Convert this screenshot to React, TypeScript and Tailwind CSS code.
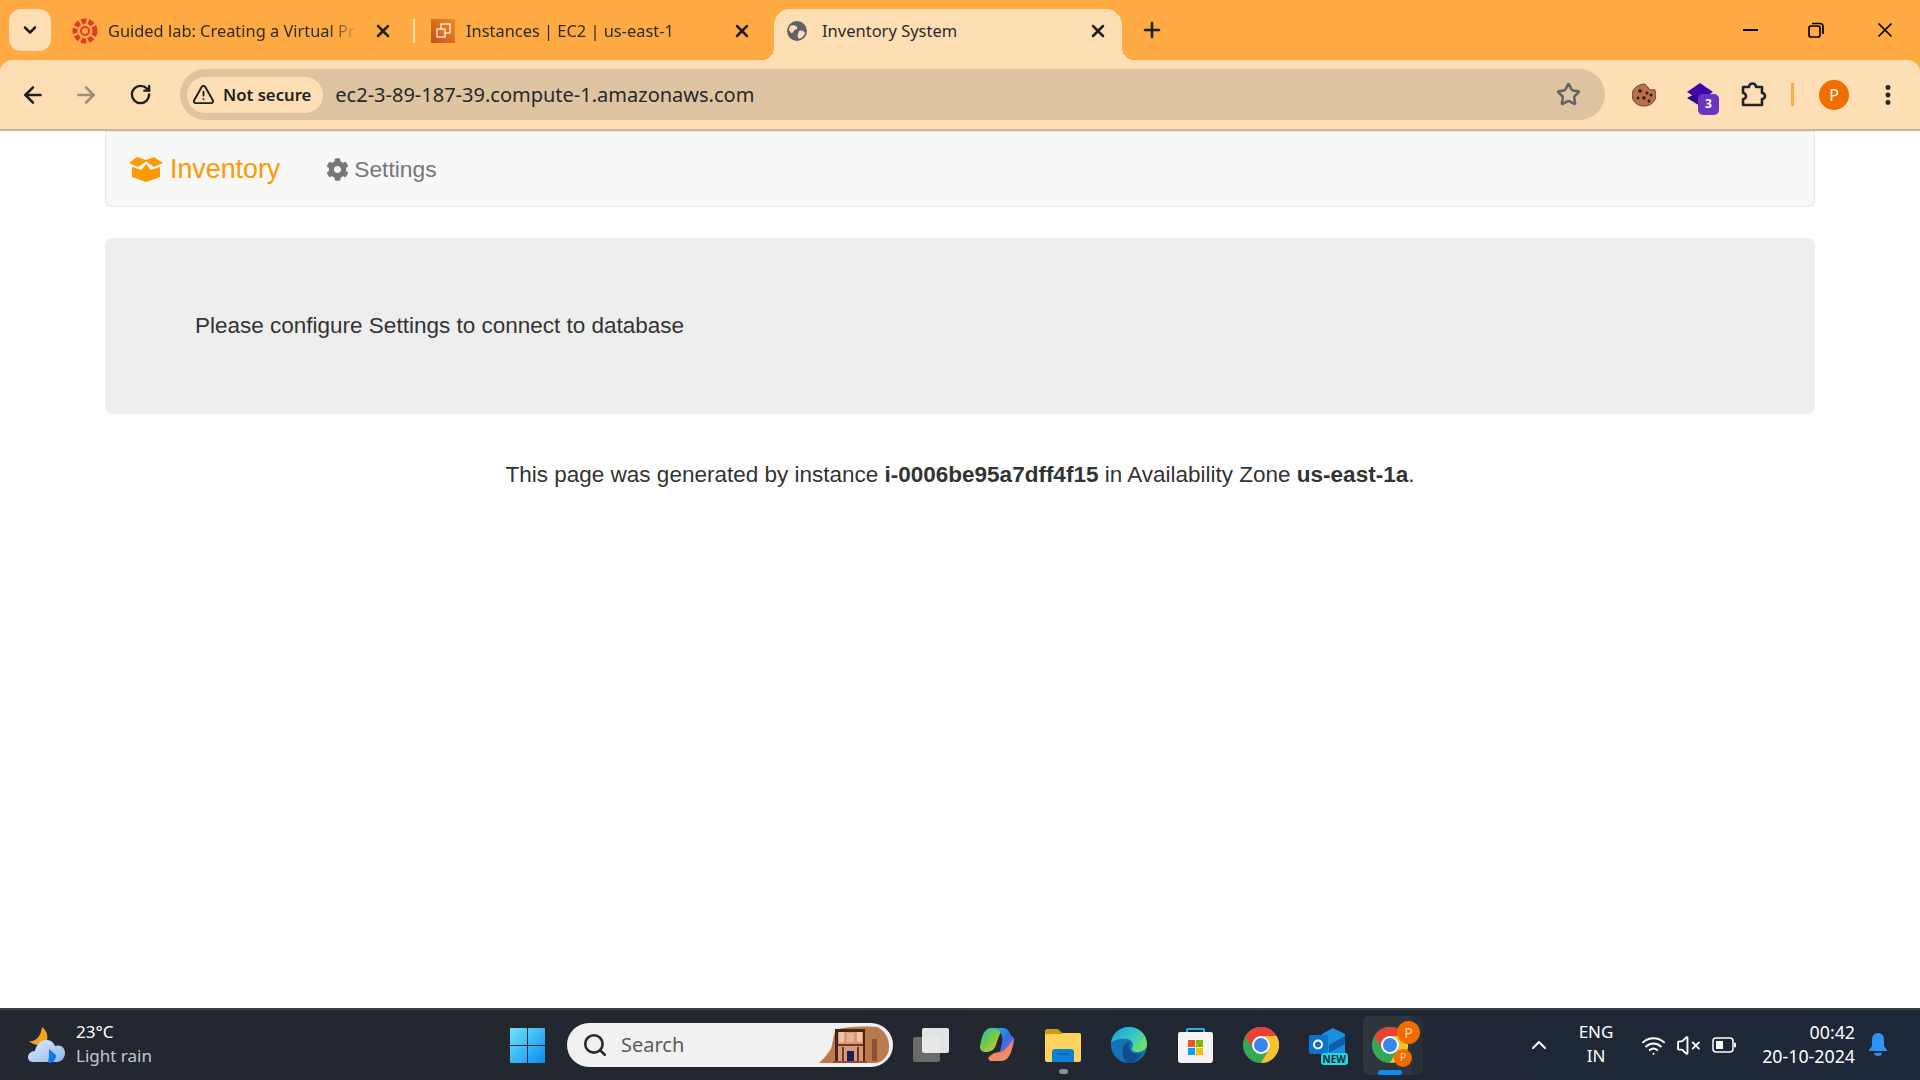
import { FaCog } from "react-icons/fa";
import { ArrowLeft, ArrowRight, ChevronDown, ChevronUp, EllipsisVertical, Plus, RotateCw, Search, Star, TriangleAlert, VolumeX, Wifi, X } from "lucide-react";

const uiFont = "font-['Noto_Sans',sans-serif]";

const CanvasIcon = () => (
  <svg width="26" height="26" viewBox="0 0 26 26">
    <circle cx="13" cy="13" r="4" fill="none" stroke="#e13a2c" strokeWidth="2" />
    <circle cx="13" cy="13" r="10" fill="none" stroke="#e13a2c" strokeWidth="5" strokeDasharray="5 2.2" />
  </svg>
);

const Ec2Icon = () => (
  <svg width="24" height="24" viewBox="0 0 24 24">
    <defs>
      <linearGradient id="ec2" x1="0" y1="1" x2="1" y2="0">
        <stop offset="0" stopColor="#c8511b" />
        <stop offset="1" stopColor="#f08a1d" />
      </linearGradient>
    </defs>
    <rect width="24" height="24" fill="url(#ec2)" />
    <rect x="10" y="5" width="9" height="9" fill="none" stroke="#fff" strokeWidth="1.2" />
    <rect x="6" y="10" width="8" height="8" fill="url(#ec2)" stroke="#fff" strokeWidth="1.2" />
  </svg>
);

const GlobeIcon = () => (
  <svg width="20" height="20" viewBox="0 0 20 20">
    <circle cx="10" cy="10" r="10" fill="#5f6368" />
    <path d="M3 5c3-1 5-1 7 1 1 2-1 3-3 3 0 2-1 3-3 3L2 9zM12 10c3-1 5 0 6 2-1 3-3 5-6 6-1-2-2-3-1-5z" fill="#fedeb5" />
  </svg>
);

const BoxIcon = () => (
  <svg width="34" height="25" viewBox="0 0 34 25" fill="#ff9900">
    <path d="M0 6 8 0 17 3 25 0 34 6 25 10 17 4.500 9 10z" />
    <path d="M17 7 21.500 13 31 10V20L17 25 3 20V10L12.500 13z" />
  </svg>
);

const CookieIcon = () => (
  <svg width="24" height="24" viewBox="0 0 24 24">
    <path d="M13 1c1 2 2 3 3 3 0 2 2 3 3.500 2.500 1 .5 2 .5 3 0C23.500 8 24 10 24 12c0 6-5 11-12 11S0 18 0 12 6 1 13 1z" fill="#b9714a" stroke="#3d2a22" strokeWidth="0.8" />
    <circle cx="8" cy="8" r="1.800" fill="#2b1b16" />
    <circle cx="15" cy="10" r="1.500" fill="#2b1b16" />
    <circle cx="19" cy="12" r="1.500" fill="#2b1b16" />
    <circle cx="6" cy="15" r="1.500" fill="#2b1b16" />
    <circle cx="12" cy="15" r="1.800" fill="#2b1b16" />
    <circle cx="17" cy="18" r="1.500" fill="#2b1b16" />
  </svg>
);

const StackIcon = () => (
  <svg width="26" height="24" viewBox="0 0 26 24">
    <path d="M0 15 13 8 26 15 13 23z" fill="#2f0a8f" />
    <path d="M0 9 13 0 26 9 13 17z" fill="#3f06a8" />
  </svg>
);

const PuzzleIcon = () => (
  <svg width="26" height="26" viewBox="0 0 26 26" fill="none" stroke="#1f2328" strokeWidth="2.600" strokeLinejoin="round">
    <path d="M2 5h6a3.500 3.500 0 0 1 7 0h6v6a3 3 0 0 1 0 6v6H2v-6a3 3 0 0 0 0-6z" />
  </svg>
);

const WindowsIcon = () => (
  <svg width="35" height="35" viewBox="0 0 35 35">
    <defs>
      <linearGradient id="win" x1="0" y1="0" x2="1" y2="1">
        <stop offset="0" stopColor="#6fe3fb" />
        <stop offset="1" stopColor="#0a8cf0" />
      </linearGradient>
    </defs>
    <path d="M1 0h16v17H0V1a1 1 0 0 1 1-1zM18 0h16a1 1 0 0 1 1 1v16H18zM0 18h17v17H1a1 1 0 0 1-1-1zM18 18h17v16a1 1 0 0 1-1 1H18z" fill="url(#win)" />
  </svg>
);

const PetraIcon = () => (
  <svg width="72" height="40" viewBox="0 0 72 40" className="block">
    <path d="M0 38 6 32 12 24 16 6C22 1 50 1 58 2 66 5 71 14 70 24 69 32 62 38 56 38z" fill="#b97a4d" />
    <rect x="16" y="4" width="30" height="34" fill="#4a2418" />
    <rect x="19" y="7" width="25" height="31" fill="#d79a75" />
    <rect x="20" y="7" width="5" height="10" fill="#f0c3a3" />
    <rect x="38" y="7" width="5" height="10" fill="#f0c3a3" />
    <rect x="28" y="8" width="7" height="9" fill="#e8b594" />
    <rect x="19" y="19" width="25" height="2" fill="#6e3a25" />
    <rect x="23" y="22" width="2" height="14" fill="#6e3a25" />
    <rect x="38" y="22" width="2" height="14" fill="#6e3a25" />
    <rect x="28" y="26" width="7" height="12" fill="#1d1a5e" />
    <rect x="14" y="36" width="34" height="2" fill="#8a5233" />
    <rect x="53" y="14" width="5" height="22" fill="#8a5233" />
  </svg>
);

const TaskViewIcon = () => (
  <svg width="37" height="34" viewBox="0 0 37 34">
    <rect y="9" width="27" height="25" rx="2" fill="#6b6b6b" />
    <rect x="9" width="27" height="25" rx="2" fill="#f4f4f4" fillOpacity="0.92" />
  </svg>
);

const CopilotIcon = () => (
  <svg width="35" height="34" viewBox="0 0 35 34">
    <defs>
      <linearGradient id="cop1" x1="0" y1="0" x2="1" y2="1">
        <stop offset="0" stopColor="#1fb6e8" />
        <stop offset="0.5" stopColor="#2f6fe0" />
        <stop offset="1" stopColor="#b55fd8" />
      </linearGradient>
      <linearGradient id="cop2" x1="0" y1="0" x2="1" y2="1">
        <stop offset="0" stopColor="#1fb6e8" />
        <stop offset="0.4" stopColor="#6cc94a" />
        <stop offset="1" stopColor="#f6c033" />
      </linearGradient>
    </defs>
    <path d="M10 0H24C20 4 18 10 16 17 14 22 11 24 6 24 2 24 0 22 0 19 1 10 4 1 10 0z" fill="url(#cop2)" />
    <path d="M13 0H24C28 1 30 4 31 8 33 8 35 11 34 14 33 20 29 27 22 28 19 28 19 26 20 23 22 16 24 9 20 4 18 1 15 1 13 0z" fill="url(#cop1)" />
    <path d="M10 33H22C28 33 33 24 33 12 28 18 24 24 20 24 15 24 11 26 8 30z" fill="#f28a68" />
  </svg>
);

const FilesIcon = () => (
  <svg width="36" height="33" viewBox="0 0 36 33">
    <path d="M0 2a2 2 0 0 1 2-2h11l4 4h17a2 2 0 0 1 2 2v4H0z" fill="#c99a16" />
    <path d="M0 5h16l3-1h15a2 2 0 0 1 2 2v25a2 2 0 0 1-2 2H2a2 2 0 0 1-2-2z" fill="#ffd35c" />
    <path d="M7 33V23a3 3 0 0 1 3-3h16a3 3 0 0 1 3 3v10z" fill="#0f7fd6" />
    <rect x="12" y="24" width="12" height="1.500" fill="#0a5a9c" />
  </svg>
);

const EdgeIcon = () => (
  <svg width="36" height="36" viewBox="0 0 36 36">
    <defs>
      <linearGradient id="edge1" x1="0" y1="0" x2="1" y2="0.6">
        <stop offset="0" stopColor="#1d9dd6" />
        <stop offset="0.6" stopColor="#35c4c8" />
        <stop offset="1" stopColor="#6ce06a" />
      </linearGradient>
    </defs>
    <circle cx="18" cy="18" r="18" fill="#1372b8" />
    <path d="M0 16C1 6 9 0 18 0 29 0 36 8 36 17 36 23 31 25 26 25 22 25 20 23 21 21 23 18 22 13 16 12 9 11 3 13 0 16z" fill="url(#edge1)" />
    <path d="M12 27C10 20 14 14 20 15 17 17 17 22 21 25 25 28 29 27 31 26 28 32 23 36 17 36 13 34 12 31 12 27z" fill="#0f4c8f" />
  </svg>
);

const StoreIcon = () => (
  <svg width="35" height="35" viewBox="0 0 35 35">
    <path d="M9 6V2a1 1 0 0 1 1-1h15a1 1 0 0 1 1 1v4" fill="none" stroke="#2ab0e8" strokeWidth="2" />
    <path d="M0 6a2 2 0 0 1 2-2h31a2 2 0 0 1 2 2v26a3 3 0 0 1-3 3H3a3 3 0 0 1-3-3z" fill="#f4f4f4" />
    <rect x="10" y="12" width="7" height="7" fill="#f25022" />
    <rect x="18" y="12" width="7" height="7" fill="#7fba00" />
    <rect x="10" y="20" width="7" height="7" fill="#00a4ef" />
    <rect x="18" y="20" width="7" height="7" fill="#ffb900" />
  </svg>
);

const ChromeIcon = ({ id }: { id: string }) => (
  <svg width="36" height="36" viewBox="0 0 36 36" aria-label={id}>
    <circle cx="18" cy="18" r="18" fill="#34a853" />
    <path d="M2.400 9A18 18 0 0 1 33.600 9H18A9 9 0 0 0 10.200 22.500z" fill="#ea4335" />
    <path d="M33.600 9A18 18 0 0 1 18 36L25.800 22.500A9 9 0 0 0 18 9z" fill="#fbc02d" />
    <circle cx="18" cy="18" r="9" fill="#fff" />
    <circle cx="18" cy="18" r="7" fill="#3b82ea" />
  </svg>
);

const OutlookIcon = () => (
  <svg width="37" height="34" viewBox="0 0 37 34">
    <path d="M13 6 24 0 36 6V26H13z" fill="#1c8fdc" />
    <path d="M36 8V16L20 25V17z" fill="#0b5fae" />
    <rect y="7" width="19" height="19" rx="2" fill="#0f72c8" />
    <circle cx="9" cy="16.500" r="4" fill="none" stroke="#fff" strokeWidth="2" />
  </svg>
);

const RainCloudIcon = () => (
  <svg width="37" height="37" viewBox="0 0 37 37">
    <defs>
      <linearGradient id="cloud" x1="0" y1="0" x2="1" y2="1">
        <stop offset="0" stopColor="#e4effc" />
        <stop offset="1" stopColor="#8cb2ec" />
      </linearGradient>
    </defs>
    <path d="M14 0C20 4 21 12 17 17 11 19 5 18 1 14 7 15 13 10 14 0z" fill="#f2a41f" />
    <path d="M6 35C2 35 0 33 0 30 0 27 3 24 7 24 8 18 13 12 19 13 23 13 26 16 27 19 33 17 37 21 37 26 37 31 33 35 29 35z" fill="url(#cloud)" />
    <path d="M21 22 28 28C28 33 25 36 22 36 20 36 20 34 21 30z" fill="#0f75f2" />
  </svg>
);

const Tab = ({ icon, title, textGap }: { icon: React.ReactNode; title: string; textGap: string }) => (
  <div className="flex h-[51px] w-[322px] shrink-0 items-center pb-[7px]">
    <span className={`flex shrink-0 justify-start ${textGap}`}>{icon}</span>
    <span className={`min-w-0 flex-1 overflow-hidden whitespace-nowrap text-[16.4px] text-[#2b2a28] [mask-image:linear-gradient(to_left,transparent,black_28px)] ${uiFont}`}>{title}</span>
    <X size={20} strokeWidth={3} className="ml-[16px] mr-[1px] shrink-0 text-[#1f1f1f]" />
  </div>
);

const TabStrip = () => (
  <div className="flex h-[60px] items-end bg-[#ffaa42]">
    <div className="mb-[9px] ml-[9px] mr-[21px] flex h-[42px] w-[42px] items-center justify-center rounded-xl bg-[#fedeb5]">
      <ChevronDown size={20} strokeWidth={3} className="text-[#1f1f1f]" />
    </div>
    <Tab icon={<CanvasIcon />} title="Guided lab: Creating a Virtual Pr" textGap="w-[36px]" />
    <div className="mb-[17px] ml-[19px] mr-[16px] h-[24px] w-[2px] self-end bg-[#fedeb5]" />
    <Tab icon={<Ec2Icon />} title="Instances | EC2 | us-east-1" textGap="w-[35px]" />
    <div className="relative ml-[21px] flex h-[51px] w-[348px] items-center rounded-t-2xl bg-[#fedeb5] pb-[7px] pl-[13px] pr-[14px]">
      <span className="absolute bottom-0 left-[-12px] h-3 w-3 bg-[radial-gradient(circle_at_0_0,transparent_12px,#fedeb5_12px)]" />
      <span className="absolute bottom-0 right-[-12px] h-3 w-3 bg-[radial-gradient(circle_at_100%_0,transparent_12px,#fedeb5_12px)]" />
      <span className="w-[35px] shrink-0"><GlobeIcon /></span>
      <span className={`flex-1 whitespace-nowrap text-[16.5px] text-[#2b2a28] ${uiFont}`}>Inventory System</span>
      <X size={20} strokeWidth={3} className="text-[#1f1f1f]" />
    </div>
    <Plus size={24} strokeWidth={2.6} className="mb-[18px] ml-[18px] text-[#1f1f1f]" />
    <div className="mb-[18px] ml-auto flex items-center pr-[23px]">
      <span className="mr-[50px] h-[2.5px] w-[15px] bg-black" />
      <svg width="16" height="16" viewBox="0 0 16 16" fill="none" stroke="#000" strokeWidth="1.700" className="mr-[49px]">
        <rect x="1" y="4" width="11" height="11" rx="2" />
        <path d="M4 1.500h8a3 3 0 0 1 3 3V12" />
      </svg>
      <X size={24} strokeWidth={1.7} className="text-black" />
    </div>
  </div>
);

const Toolbar = () => (
  <div className="border-b-2 border-[#ccb698] bg-[#ffaa42]">
    <div className="flex h-[69px] items-center rounded-t-xl bg-[#fedeb5]">
      <ArrowLeft size={26} strokeWidth={2.300} className="ml-[20px] text-[#1f1f1f]" />
      <ArrowRight size={26} strokeWidth={2.300} className="ml-[27px] text-[#9c8d79]" />
      <RotateCw size={23} strokeWidth={2.500} className="ml-[30px] text-[#1f1f1f]" />
      <div className="ml-[28px] flex h-[51px] w-[1425px] items-center rounded-full bg-[#dec4a1] pl-[7px]">
        <div className={`flex h-[36px] items-center gap-[8px] rounded-full bg-[#fedeb5] pl-[5px] pr-[12px] text-[16.7px] font-semibold text-[#1f1f1f] ${uiFont}`}>
          <TriangleAlert size={23} strokeWidth={2} />
          Not secure
        </div>
        <span className={`ml-[12px] text-[20px] text-[#26282c] ${uiFont}`}>ec2-3-89-187-39.compute-1.amazonaws.com</span>
        <Star size={25} strokeWidth={2.400} className="ml-auto mr-[24px] text-[#5f6368]" />
      </div>
      <span className="ml-[27px]"><CookieIcon /></span>
      <span className="relative ml-[31px] flex h-[30px] w-[30px] items-center">
        <StackIcon />
        <span className={`absolute left-[11px] top-[14px] flex h-[21px] w-[21px] items-center justify-center rounded-[5px] bg-[#6a35c0] text-[12px] font-bold text-white ${uiFont}`}>3</span>
      </span>
      <span className="ml-[24px]"><PuzzleIcon /></span>
      <span className="ml-[24px] h-[23px] w-[3px] bg-[#ffaa42]" />
      <span className={`ml-[25px] flex h-[30px] w-[30px] items-center justify-center rounded-full bg-[#f06d00] text-[16px] text-white ${uiFont}`}>P</span>
      <EllipsisVertical size={26} strokeWidth={2.600} className="ml-[26px] text-[#1f1f1f]" />
    </div>
  </div>
);

const PageBody = () => (
  <main className="flex-1 bg-white px-[105px] font-['Liberation_Sans',sans-serif] text-[#333333]">
    <nav className="flex h-[76px] items-center rounded-b-md border border-[#e7e7e7] bg-[#f8f8f8] pl-[23px]">
      <span className="flex items-center gap-[7px] text-[26.800px] text-[#ff9900]">
        <BoxIcon />
        Inventory
      </span>
      <span className="ml-[46px] flex items-center gap-[5px] text-[22.800px] text-[#777777]">
        <FaCog size={23} />
        Settings
      </span>
    </nav>
    <section className="mt-[31px] flex h-[176px] items-center rounded-lg bg-[#eeeeee] pb-[1px] pl-[90px] text-[22.500px]">
      Please configure Settings to connect to database
    </section>
    <p className="mt-[44px] text-center text-[22.500px]">
      This page was generated by instance <b>i-0006be95a7dff4f15</b> in Availability Zone <b>us-east-1a</b>.
    </p>
  </main>
);

const Taskbar = () => (
  <footer className={`flex h-[72px] items-center border-t-2 border-[#3b3e43] bg-gradient-to-r from-[#23272f] via-[#22272f] to-[#1c2739] text-white ${uiFont}`}>
    <div className="flex w-[510px] shrink-0 items-center pl-[28px]">
      <RainCloudIcon />
      <div className="ml-[11px] mb-[2px] text-[17px] leading-[24px]">
        <div>23°C</div>
        <div className="text-[#c6c8cb]">Light rain</div>
      </div>
    </div>
    <WindowsIcon />
    <div className="relative ml-[22px] flex h-[44px] w-[326px] items-center rounded-full bg-[#f1f1f1] pl-[15px] text-[20px] text-[#5a5a5a]">
      <Search size={26} strokeWidth={2.400} className="text-[#2b2b2b]" />
      <span className="ml-[13px]">Search</span>
      <span className="absolute bottom-[2px] right-[2px]"><PetraIcon /></span>
    </div>
    <div className="ml-[20px] flex w-[37px] justify-center"><TaskViewIcon /></div>
    <div className="ml-[14px] flex w-[66px] justify-center"><CopilotIcon /></div>
    <div className="relative flex w-[66px] justify-center">
      <FilesIcon />
      <span className="absolute bottom-[-12px] h-[5px] w-[9px] rounded-full bg-[#8b8d91]" />
    </div>
    <div className="flex w-[66px] justify-center"><EdgeIcon /></div>
    <div className="flex w-[66px] justify-center"><StoreIcon /></div>
    <div className="flex w-[66px] justify-center"><ChromeIcon id="chrome" /></div>
    <div className="relative flex w-[66px] justify-center">
      <OutlookIcon />
      <span className="absolute bottom-[-3px] right-[12px] rounded-[3px] bg-[#27d6e0] px-[2px] text-[10px] font-bold leading-[12px] text-[#0b2b3a]">NEW</span>
    </div>
    <div className="relative ml-[3px] flex h-[59px] w-[54px] items-center justify-center rounded-md bg-[#2f343d]">
      <span className="absolute bottom-0 left-[48px] top-0 w-[12px] rounded-r-md bg-[#2a2e37]" />
      <span className="relative"><ChromeIcon id="chrome-profile" /></span>
      <span className="absolute right-[-3px] top-[5px] flex h-[23px] w-[23px] items-center justify-center rounded-full bg-[#ef6c00] text-[14px] text-[#ffd0a0]">P</span>
      <span className="absolute bottom-[8px] right-[5px] flex h-[18px] w-[18px] items-center justify-center rounded-full bg-[#ef6c00] text-[11px] text-[#ffd0a0]">P</span>
      <span className="absolute bottom-0 h-[5px] w-[24px] rounded-full bg-[#0a8cf0]" />
    </div>
    <div className="ml-auto flex items-center pr-[19px]">
      <span className="flex w-[40px] justify-center"><ChevronUp size={24} strokeWidth={2} /></span>
      <div className="ml-[2px] mb-[2px] w-[70px] text-center text-[17px] leading-[24px]">
        <div>ENG</div>
        <div>IN</div>
      </div>
      <span className="ml-[4px] flex w-[36px] justify-center"><Wifi size={25} strokeWidth={2} /></span>
      <span className="flex w-[34px] justify-center"><VolumeX size={25} strokeWidth={1.800} /></span>
      <span className="flex w-[38px] justify-center">
        <svg width="24" height="16" viewBox="0 0 24 16">
          <rect x="1" y="1" width="20" height="14" rx="3" fill="none" stroke="#fff" strokeWidth="1.500" />
          <rect x="4" y="4" width="7" height="8" fill="#fff" />
          <rect x="22" y="5.500" width="2" height="5" rx="1" fill="#fff" />
        </svg>
      </span>
      <div className="mb-[2px] w-[112px] text-right text-[17.800px] leading-[24px]">
        <div>00:42</div>
        <div className="whitespace-nowrap">20-10-2024</div>
      </div>
      <span className="flex w-[46px] justify-center">
        <svg width="20" height="24" viewBox="0 0 20 24" fill="#2f93f5">
          <path d="M10 0c4 0 6 3 6 7v6l3 4v1H1v-1l3-4V7c0-4 2-7 6-7z" />
          <path d="M6 20h8c0 2-2 3-4 3s-4-1-4-3z" />
        </svg>
      </span>
    </div>
  </footer>
);

export default function App() {
  return (
    <div className="flex h-screen flex-col overflow-hidden">
      <TabStrip />
      <Toolbar />
      <PageBody />
      <Taskbar />
    </div>
  );
}
